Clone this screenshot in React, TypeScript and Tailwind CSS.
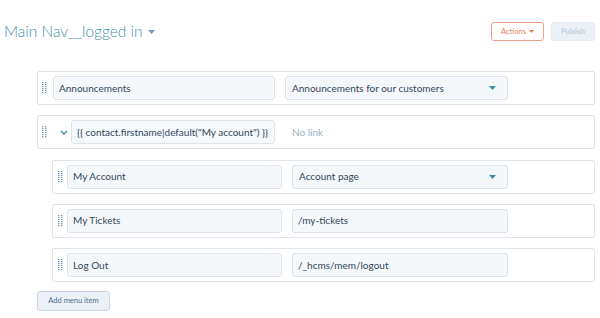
import React from "react";

function Handle() {
  return (
    <svg width="5" height="12" viewBox="0 0 5 12" className="shrink-0">
      {[0, 1, 2, 3, 4, 5].map((i) => (
        <g key={i}>
          <rect x="0" y={i * 2} width="1.5" height="1.2" fill="#7c98b6" />
          <rect x="3" y={i * 2} width="1.5" height="1.2" fill="#7c98b6" />
        </g>
      ))}
    </svg>
  );
}

function Caret({ color }: { color: string }) {
  return (
    <svg width="7" height="4" viewBox="0 0 7 4" className="shrink-0">
      <path d="M0 0 L7 0 L3.5 4 Z" fill={color} />
    </svg>
  );
}

function Input({ w, children }: { w: string; children: React.ReactNode }) {
  return (
    <div
      className={`${w} h-[24px] shrink-0 flex items-center px-[5px] bg-[#f5f8fa] border border-[#dfe3eb] rounded-[3px] text-[10px] text-[#33475b] whitespace-nowrap overflow-hidden`}
    >
      {children}
    </div>
  );
}

function Select({ w, children }: { w: string; children: React.ReactNode }) {
  return (
    <div
      className={`${w} h-[24px] shrink-0 flex items-center justify-between pl-[6px] pr-[11px] bg-[#f5f8fa] border border-[#dfe3eb] rounded-[3px] text-[10px] text-[#33475b] whitespace-nowrap`}
    >
      <span>{children}</span>
      <Caret color="#3d8ca8" />
    </div>
  );
}

export default function App() {
  return (
    <div
      className="w-[600px] h-[318px] bg-white overflow-hidden relative"
      style={{ fontFamily: "Lato, 'Noto Sans', sans-serif" }}
    >
      <div className="flex items-start justify-between pl-[4px] pr-[5px] pt-[22px]">
        <div className="flex items-center gap-[5px]">
          <span className="text-[15.5px] font-light text-[#3e8ea9] leading-[19px]">
            Main Nav__logged in
          </span>
          <Caret color="#7c98b6" />
        </div>
        <div className="flex items-center gap-[7px]">
          <div className="w-[53px] h-[19px] border border-[#f2a08c] rounded-[3px] flex items-center justify-center gap-[3px] text-[7.5px] text-[#e8795c]">
            <span>Actions</span>
            <svg width="5" height="3" viewBox="0 0 5 3">
              <path d="M0 0 L5 0 L2.5 3 Z" fill="#e8795c" />
            </svg>
          </div>
          <div className="w-[44px] h-[19px] bg-[#eaf0f6] border border-[#e3eaf1] rounded-[3px] flex items-center justify-center text-[7.5px] text-[#b6c7d8]">
            Publish
          </div>
        </div>
      </div>

      <div className="ml-[37px] w-[558px] mt-[30px] flex flex-col gap-[10.25px]">
        <div className="h-[34px] border border-[#dfe3eb] rounded-[2px] flex items-center pl-[4px]">
          <Handle />
          <div className="w-[6px] shrink-0" />
          <Input w="w-[222px]">Announcements</Input>
          <div className="w-[10px] shrink-0" />
          <Select w="w-[223px]">Announcements for our customers</Select>
        </div>

        <div className="h-[34px] border border-[#dfe3eb] rounded-[2px] flex items-center pl-[4px]">
          <Handle />
          <div className="w-[13px] shrink-0" />
          <svg width="8" height="5" viewBox="0 0 8 5" className="shrink-0">
            <path d="M1 1 L4 4 L7 1" stroke="#3d8ca8" strokeWidth="1.4" fill="none" />
          </svg>
          <div className="w-[3px] shrink-0" />
          <Input w="w-[204px]">{'{{ contact.firstname|default("My account") }}'}</Input>
          <div className="w-[10px] shrink-0" />
          <div className="pl-[7px] text-[10px] text-[#99afc4]">No link</div>
        </div>

        <div className="ml-[15px] flex flex-col gap-[10.25px]">
          <div className="h-[34px] border border-[#dfe3eb] rounded-[2px] flex items-center pl-[5px]">
            <Handle />
            <div className="w-[4px] shrink-0" />
            <Input w="w-[215px]">My Account</Input>
            <div className="w-[10px] shrink-0" />
            <Select w="w-[216px]">Account page</Select>
          </div>
          <div className="h-[34px] border border-[#dfe3eb] rounded-[2px] flex items-center pl-[5px]">
            <Handle />
            <div className="w-[4px] shrink-0" />
            <Input w="w-[215px]">My Tickets</Input>
            <div className="w-[10px] shrink-0" />
            <Input w="w-[216px]">/my-tickets</Input>
          </div>
          <div className="h-[34px] border border-[#dfe3eb] rounded-[2px] flex items-center pl-[5px]">
            <Handle />
            <div className="w-[4px] shrink-0" />
            <Input w="w-[215px]">Log Out</Input>
            <div className="w-[10px] shrink-0" />
            <Input w="w-[216px]">/_hcms/mem/logout</Input>
          </div>
        </div>
      </div>

      <div className="ml-[37px] mt-[9px] w-[73px] h-[20px] bg-[#eaf0f6] border border-[#cbd6e2] rounded-[3px] flex items-center justify-center text-[7.5px] text-[#506e91]">
        Add menu item
      </div>
    </div>
  );
}
